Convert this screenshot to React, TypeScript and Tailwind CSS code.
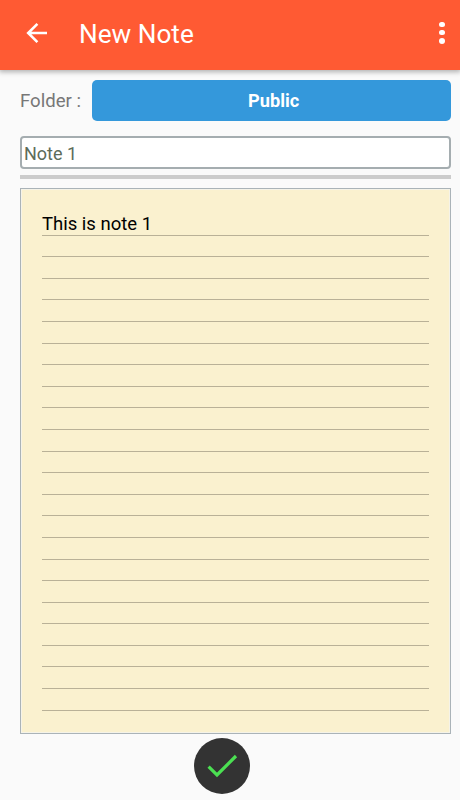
import React from 'react';

const RULES = Array.from({ length: 23 }, (_, i) => i);

function Header() {
  return (
    <header className="relative z-10 flex h-[70px] shrink-0 items-center bg-[#ff5a33] pl-[26px] pr-[15px] text-white shadow-[0_1px_5px_1px_rgba(0,0,0,0.3)]">
      <button aria-label="Back" className="-mt-[5px] h-[22px] w-[22px]">
        <svg width="22" height="22" viewBox="0 0 22 22" fill="none" stroke="white" strokeWidth="2.6">
          <path d="M21 11H2.5M11.4 1.8L2.2 11l9.2 9.2" />
        </svg>
      </button>
      <h1 className="-mt-[2px] ml-[31px] flex-1 whitespace-nowrap text-[26.2px] leading-8">New Note</h1>
      <button aria-label="More options" className="-mt-[5px] flex h-[22px] flex-col items-center justify-between">
        <span className="h-[5.6px] w-[5.6px] rounded-full bg-white" />
        <span className="h-[5.6px] w-[5.6px] rounded-full bg-white" />
        <span className="h-[5.6px] w-[5.6px] rounded-full bg-white" />
      </button>
    </header>
  );
}

function NotePaper() {
  return (
    <section className="mt-[9px] h-[546px] shrink-0 border border-[#aab3b8] bg-[#f5f3e8] p-px">
      <div className="h-full bg-[#faf1cf] px-[20px] pt-[24px]">
        {RULES.map((i) => (
          <div key={i} className="flex h-[21.6px] items-end whitespace-nowrap border-b border-[#b9b197] text-[18.5px] leading-[21px] text-black">
            {i === 0 ? 'This is note 1' : ''}
          </div>
        ))}
      </div>
    </section>
  );
}

export default function App() {
  return (
    <div className="flex h-[800px] w-[460px] flex-col overflow-hidden bg-[#fafafa] font-[Roboto,sans-serif]">
      <Header />
      <main className="flex flex-1 flex-col pl-[20px] pr-[9px] pt-[10px]">
        <div className="flex h-[41px] shrink-0 items-center">
          <span className="w-[72.4px] whitespace-nowrap text-[18.6px] leading-6 text-[#777777]">Folder :</span>
          <button className="h-[41px] flex-1 rounded-[5px] bg-[#3498db] pl-[4px] text-[18.2px] font-bold text-white">Public</button>
        </div>
        <div className="mt-[15px] flex h-[33px] shrink-0 items-center rounded-[4px] border-2 border-[#a5adb0] bg-white pl-[2px] pt-[2px] text-[18px] leading-6 text-[#5c6c59]">
          Note 1
        </div>
        <div className="mt-[6px] h-[4px] shrink-0 bg-[#cccccc]" />
        <NotePaper />
        <button aria-label="Save note" className="ml-[174.4px] mt-[4px] flex h-[56px] w-[56px] shrink-0 items-center justify-center rounded-full bg-[#333333]">
          <svg width="56" height="56" viewBox="0 0 56 56" fill="none" stroke="#4be052" strokeWidth="3.2">
            <path d="M14.6 28.6L23 37L42 18" />
          </svg>
        </button>
      </main>
    </div>
  );
}
